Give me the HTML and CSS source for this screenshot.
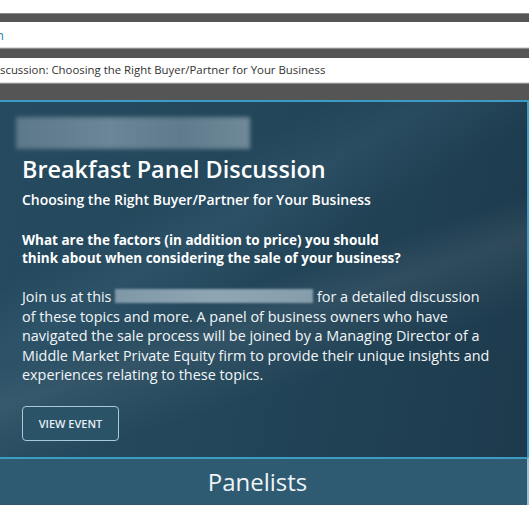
FILE: index.html
```html
<!DOCTYPE html>
<html lang="en">

<head>
    <meta charset="UTF-8">
    <meta name="viewport" content="width=device-width, initial-scale=1.0">
    <title>Breakfast Panel Discussion</title>
    <link rel="stylesheet" href="styles.css">
</head>

<body>
    <div class="top-gap"></div>
    <div class="bar bar-thin"></div>
    <div class="field field-link"><span class="clipped">n</span></div>
    <div class="bar bar-mid"></div>
    <div class="field field-title">scussion: Choosing the Right Buyer/Partner for Your Business</div>
    <div class="bar bar-wide"></div>

    <section class="hero">
        <div class="redacted redacted-head"></div>
        <h1>Breakfast Panel Discussion</h1>
        <h2>Choosing the Right Buyer/Partner for Your Business</h2>
        <h3>What are the factors (in addition to price) you should<br>think about when considering the sale of your business?</h3>
        <p>Join us at this <span class="redacted redacted-inline"></span> for a detailed discussion<br>
            of these topics and more. A panel of business owners who have<br>
            navigated the sale process will be joined by a Managing Director of a<br>
            Middle Market Private Equity firm to provide their unique insights and<br>
            experiences relating to these topics.</p>
        <a class="btn" href="#">VIEW EVENT</a>
    </section>

    <section class="panelists">
        <h2>Panelists</h2>
    </section>
</body>

</html>
```

FILE: styles.css
```css
* {
    box-sizing: border-box;
    margin: 0;
    padding: 0;
}

body {
    background: #fff;
    font-family: "Open Sans", Arial, sans-serif;
    overflow: hidden;
}

.top-gap {
    height: 13px;
}

.bar {
    background-color: #555;
    border-top: 1px solid #8a8a8a;
}

.bar-thin {
    height: 9px;
}

.bar-mid {
    height: 10px;
}

.bar-wide {
    height: 17px;
}

.field {
    background: #fff;
    border-bottom: 1px solid #ddd;
    white-space: nowrap;
    overflow: hidden;
}

.field-link {
    height: 26px;
    padding-top: 4px;
    font-size: 13px;
    color: #1b87ad;
}

.clipped {
    margin-left: -4px;
}

.field-title {
    height: 25px;
    padding-top: 4px;
    font-size: 11.4px;
    color: #333;
}

.hero {
    height: 357px;
    padding: 15px 22px 0;
    color: #fff;
    border-top: 2px solid #3d9cc3;
    border-right: 2px solid #3d9cc3;
    background:
        linear-gradient(162deg, transparent 50%, rgba(255, 255, 255, 0.07) 58%, transparent 72%),
        linear-gradient(150deg, transparent 28%, rgba(120, 170, 200, 0.10) 38%, transparent 50%),
        linear-gradient(100deg, #264b60 0%, #23465a 45%, #1d3a4c 100%);
}

.redacted {
    display: inline-block;
    background: linear-gradient(90deg, #5c7889, #6b8696 40%, #5f7b8c 70%, #6f8998);
    filter: blur(2px);
}

.redacted-head {
    display: block;
    width: 234px;
    height: 32px;
    margin-left: -6px;
}

.redacted-inline {
    width: 198px;
    height: 14px;
    vertical-align: -1px;
    background: linear-gradient(90deg, #7f98a7, #8fa6b4 50%, #869eac);
    filter: blur(1px);
}

h1 {
    font-size: 23.4px;
    font-weight: 600;
    line-height: 30px;
    margin-top: 5px;
}

h2 {
    font-size: 14px;
    font-weight: 600;
    line-height: 20px;
    margin-top: 6px;
}

h3 {
    font-size: 13.5px;
    font-weight: 700;
    line-height: 17.5px;
    margin-top: 22px;
}

p {
    font-size: 14.4px;
    line-height: 19.5px;
    margin-top: 20px;
    color: #f2f6f8;
    white-space: nowrap;
}

.btn {
    display: inline-block;
    width: 97px;
    height: 35px;
    line-height: 33px;
    margin-top: 21px;
    text-align: center;
    font-size: 11px;
    font-weight: 600;
    color: #e4eff5;
    text-decoration: none;
    border: 1px solid #a9c9d8;
    border-radius: 4px;
    background-color: #2b5368;
}

.panelists {
    height: 50px;
    padding-right: 12px;
    text-align: center;
    background-color: #2e5a72;
    border-top: 2px solid #3d9cc3;
    border-right: 2px solid #9ec0cf;
}

.panelists h2 {
    margin: 0;
    padding-top: 7px;
    font-size: 24px;
    font-weight: 400;
    line-height: 32px;
    color: #eef4f7;
}
```
